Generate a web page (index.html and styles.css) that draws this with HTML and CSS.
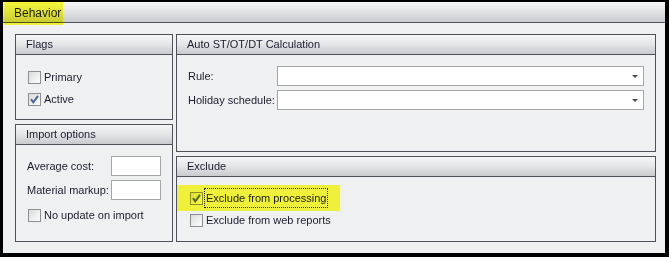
FILE: index.html
```html
<!DOCTYPE html>
<html>
<head>
<meta charset="utf-8">
<link rel="stylesheet" href="styles.css">
</head>
<body>
<div class="frame">
  <div class="tabbar"><span class="tab-title">Behavior</span><span class="hl hl-tab"></span></div>
  <div class="content">
    <div class="col col-left">
      <div class="group group-short">
        <div class="ghead">Flags</div>
        <div class="gbody flags">
          <div class="crow"><span class="cb"></span><span class="clabel">Primary</span></div>
          <div class="crow"><span class="cb checked"><svg viewBox="0 0 11 11" width="11" height="11"><path d="M2 5.2 L4.3 8.3 L9 1.8" fill="none" stroke="#4a679c" stroke-width="2"/></svg></span><span class="clabel">Active</span></div>
        </div>
      </div>
      <div class="group group-tall">
        <div class="ghead">Import options</div>
        <div class="gbody import">
          <div class="frow"><span class="flabel w84">Average cost:</span><span class="input small"></span></div>
          <div class="frow"><span class="flabel w84">Material markup:</span><span class="input small"></span></div>
          <div class="crow"><span class="cb"></span><span class="clabel">No update on import</span></div>
        </div>
      </div>
    </div>
    <div class="col col-right">
      <div class="group group-tall">
        <div class="ghead">Auto ST/OT/DT Calculation</div>
        <div class="gbody auto">
          <div class="frow"><span class="flabel w89">Rule:</span><span class="input combo"><span class="arrow"></span></span></div>
          <div class="frow"><span class="flabel w89">Holiday schedule:</span><span class="input combo"><span class="arrow"></span></span></div>
        </div>
      </div>
      <div class="group group-short excl">
        <div class="ghead">Exclude</div>
        <div class="gbody exclude">
          <div class="crow"><span class="cb checked"><svg viewBox="0 0 11 11" width="11" height="11"><path d="M2 5.2 L4.3 8.3 L9 1.8" fill="none" stroke="#4a679c" stroke-width="2"/></svg></span><span class="clabel focus">Exclude from processing</span></div>
          <div class="crow"><span class="cb"></span><span class="clabel">Exclude from web reports</span></div>
        </div>
        <span class="hl hl-excl"></span>
      </div>
    </div>
  </div>
</div>
</body>
</html>
```
FILE: styles.css
```css
html, body {
  margin: 0;
  padding: 0;
  background: #000;
}
body {
  padding: 2px 0 0 3px;
  font-family: "Liberation Sans", Arial, sans-serif;
  font-size: 11px;
  color: #1c1c2c;
}
.frame {
  position: relative;
  width: 662px;
  height: 251px;
  background: #eff0f2;
  display: flex;
  flex-direction: column;
}
.tabbar {
  position: relative;
  height: 20px;
  border-bottom: 1px solid #4f545c;
  background: linear-gradient(#f5f6f7, #dcdee1 60%, #c9ccd0);
  display: flex;
  align-items: center;
}
.tab-title {
  position: relative;
  z-index: 2;
  margin-left: 11px;
  font-size: 12px;
  padding-top: 1px;
}
.hl {
  position: absolute;
  background: #ffff3c;
  mix-blend-mode: multiply;
  z-index: 3;
  pointer-events: none;
}
.hl-tab {
  left: 1px;
  top: 0;
  width: 59px;
  height: 23px;
}
.content {
  flex: 1;
  padding: 11px 9px 11px 12px;
  display: flex;
  gap: 3px;
}
.col {
  display: flex;
  flex-direction: column;
  gap: 4px;
}
.col-left { width: 158px; }
.col-right { width: 480px; }
.group {
  position: relative;
  border: 1px solid #4d525a;
  box-sizing: border-box;
  display: flex;
  flex-direction: column;
}
.group-short { height: 86px; }
.group-tall { height: 118px; }
.ghead {
  height: 19px;
  border-bottom: 1px solid #4d525a;
  background: linear-gradient(#f5f6f7, #e3e5e7 50%, #c8cbcf);
  padding-left: 10px;
  line-height: 19px;
}
.gbody {
  flex: 1;
  display: flex;
  flex-direction: column;
}
.flags { padding: 11px 0 0 12px; }
.import { padding: 11px 0 0 11px; gap: 4px; }
.import .crow { padding-left: 1px; }
.auto { padding: 11px 11px 0 11px; gap: 4px; }
.exclude { padding: 10px 0 0 13px; }
.crow {
  height: 22px;
  display: flex;
  align-items: center;
  gap: 3px;
}
.cb {
  width: 11px;
  height: 11px;
  border: 1px solid #8d8f91;
  background: linear-gradient(135deg, #d8d9da, #f4f4f4 70%, #fbfbfb);
  display: flex;
  align-items: center;
  justify-content: center;
  flex: none;
}
.clabel {
  line-height: 14px;
}
.focus {
  border: 1px dotted #222;
  padding: 2px 1px 2px 1px;
  margin-left: -2px;
}
.frow {
  height: 20px;
  display: flex;
  align-items: center;
}
.flabel { flex: none; }
.w84 { width: 84px; }
.w89 { width: 89px; }
.input {
  height: 18px;
  border: 1px solid #a3a5a8;
  background: #fff;
  box-sizing: content-box;
}
.small { width: 48px; }
.combo {
  flex: 1;
  position: relative;
  display: flex;
  align-items: center;
  justify-content: flex-end;
}
.arrow {
  width: 0;
  height: 0;
  border-left: 3px solid transparent;
  border-right: 3px solid transparent;
  border-top: 3px solid #4a4c50;
  margin-right: 5px;
  margin-top: 1px;
}
.hl-excl {
  left: 0;
  top: 28px;
  width: 163px;
  height: 26px;
}
```
